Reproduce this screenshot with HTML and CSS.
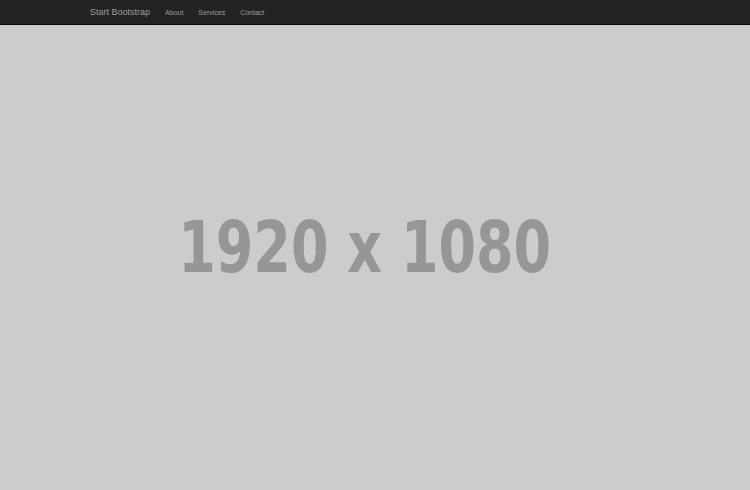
FILE: index.html
```html
<!DOCTYPE html>
<html>
<head>
<meta charset="utf-8">
<link rel="stylesheet" href="styles.css">
</head>
<body>
<nav class="navbar">
  <div class="container">
    <a class="brand" href="#">Start Bootstrap</a>
    <ul class="nav">
      <li><a href="#">About</a></li>
      <li><a href="#">Services</a></li>
      <li><a href="#">Contact</a></li>
    </ul>
  </div>
</nav>
<main class="hero">
  <div class="placeholder">1920 x 1080</div>
</main>
</body>
</html>
```
FILE: styles.css
```css
html, body {
  margin: 0;
  padding: 0;
  height: 100%;
}
body {
  background: #cccccc;
  font-family: "Liberation Sans", Arial, sans-serif;
  display: flex;
  flex-direction: column;
}
.navbar {
  height: 24px;
  background: #222222;
  border-bottom: 1px solid #080808;
  flex: none;
}
.container {
  width: 585px;
  margin: 0 auto;
  padding: 0 7.5px;
  box-sizing: border-box;
  display: flex;
  align-items: center;
  height: 100%;
}
.brand {
  color: #9d9d9d;
  text-decoration: none;
  font-size: 9px;
  padding: 0 7.5px 0 0;
}
.nav {
  list-style: none;
  margin: 0;
  padding: 0;
  display: flex;
}
.nav a {
  display: block;
  color: #9d9d9d;
  text-decoration: none;
  font-size: 7px;
  padding: 0 7.5px;
}
.hero {
  flex: 1;
  display: flex;
  align-items: center;
  justify-content: center;
  padding-bottom: 22px;
  padding-right: 20px;
}
.placeholder {
  font-family: "DejaVu Sans", sans-serif;
  font-weight: bold;
  font-size: 72px;
  color: #969696;
  line-height: 1;
  transform: scaleX(0.75);
}
```
